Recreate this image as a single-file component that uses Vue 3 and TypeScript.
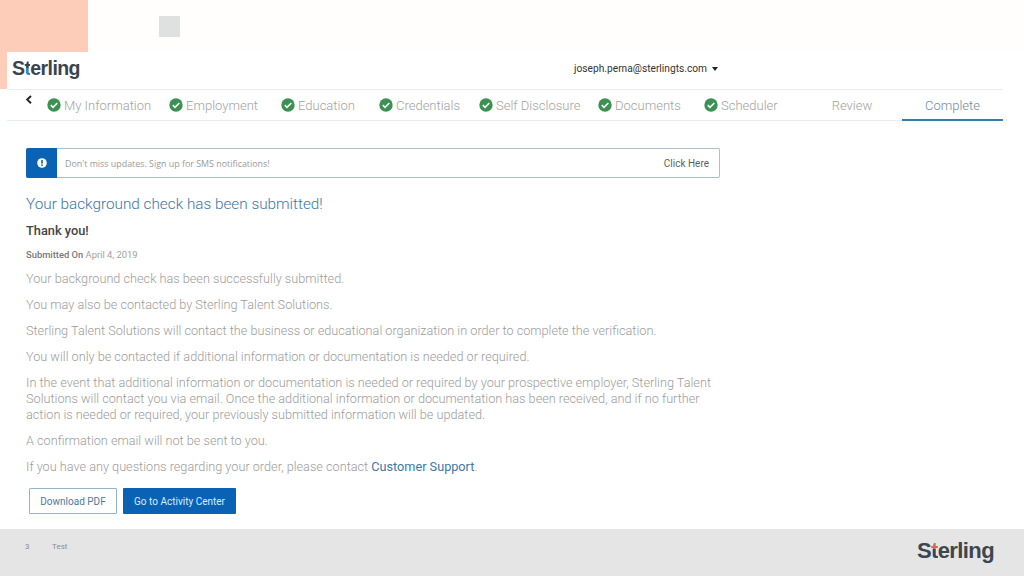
<script setup lang="ts">
interface Step { label: string; done: boolean; width: number; active?: boolean }
const steps: Step[] = [
  { label: 'My Information', done: true, width: 122 },
  { label: 'Employment', done: true, width: 112 },
  { label: 'Education', done: true, width: 98 },
  { label: 'Credentials', done: true, width: 100 },
  { label: 'Self Disclosure', done: true, width: 119 },
  { label: 'Documents', done: true, width: 106 },
  { label: 'Scheduler', done: true, width: 98 },
  { label: 'Review', done: false, width: 100 },
  { label: 'Complete', done: false, width: 101, active: true },
]
const paragraphs: string[] = [
  'Your background check has been successfully submitted.',
  'You may also be contacted by Sterling Talent Solutions.',
  'Sterling Talent Solutions will contact the business or educational organization in order to complete the verification.',
  'You will only be contacted if additional information or documentation is needed or required.',
  'In the event that additional information or documentation is needed or required by your prospective employer, Sterling Talent Solutions will contact you via email. Once the additional information or documentation has been received, and if no further action is needed or required, your previously submitted information will be updated.',
  'A confirmation email will not be sent to you.',
]
</script>

<template>
  <div class="slide">
    <div class="peach" />
    <div class="topband"><div class="square" /></div>
    <main class="screen">
      <header class="head">
        <div class="logo">S<span class="logo-t">t</span>erling</div>
        <div class="user">joseph.perna@sterlingts.com<span class="caret" /></div>
      </header>
      <nav class="steps">
        <svg class="back" width="8" height="10" viewBox="0 0 8 10"><path d="M6 1 2.2 4.6 6 8.2" fill="none" stroke="#222" stroke-width="1.9" /></svg>
        <div
          v-for="s in steps"
          :key="s.label"
          class="step"
          :class="{ active: s.active, plain: !s.done }"
          :style="{ width: s.width + 'px' }"
        >
          <svg v-if="s.done" class="check" width="14" height="14" viewBox="0 0 14 14">
            <circle cx="7" cy="7" r="6.7" fill="#3b9250" />
            <path d="M3.8 7.2 6 9.3 10.3 5" fill="none" stroke="#fff" stroke-width="1.7" />
          </svg>
          <span>{{ s.label }}</span>
        </div>
      </nav>
      <section class="content">
        <div class="banner">
          <div class="banner-icon">
            <svg width="10" height="10" viewBox="0 0 10 10">
              <circle cx="5" cy="5" r="4.8" fill="#fff" />
              <rect x="4.2" y="2" width="1.6" height="3.6" fill="#0a62b4" />
              <rect x="4.2" y="6.4" width="1.6" height="1.5" fill="#0a62b4" />
            </svg>
          </div>
          <span class="banner-text">Don't miss updates. Sign up for SMS notifications!</span>
          <span class="banner-link">Click Here</span>
        </div>
        <h1>Your background check has been submitted!</h1>
        <h2>Thank you!</h2>
        <div class="submitted"><b>Submitted On</b> April 4, 2019</div>
        <p v-for="p in paragraphs" :key="p">{{ p }}</p>
        <p>If you have any questions regarding your order, please contact <span class="link">Customer Support</span>.</p>
        <div class="actions">
          <button class="btn outline">Download PDF</button>
          <button class="btn solid">Go to Activity Center</button>
        </div>
      </section>
    </main>
    <footer class="foot">
      <span class="num">3</span>
      <span class="foot-label">Test</span>
      <div class="logo foot-logo">S<span class="logo-t red">t</span>erling</div>
    </footer>
  </div>
</template>

<style>
html, body { margin: 0; background: #fff; }
</style>

<style scoped>
.slide {
  position: relative;
  width: 1024px;
  height: 576px;
  overflow: hidden;
  display: flex;
  flex-direction: column;
  background: #fff;
  font-family: Roboto, "Liberation Sans", sans-serif;
}
.peach {
  position: absolute;
  left: 0;
  top: 0;
  z-index: 1;
  width: 88px;
  height: 89px;
  background: #fecdb9;
}
.topband {
  height: 52px;
  flex: none;
  background: #fffefd;
  padding: 16px 0 0 159px;
  box-sizing: border-box;
}
.square { width: 21px; height: 21px; background: #dfe1e0; }
.screen {
  position: relative;
  z-index: 2;
  flex: 1;
  margin-left: 7px;
  background: #fff;
  display: flex;
  flex-direction: column;
}
.head {
  height: 38px;
  flex: none;
  display: flex;
  align-items: center;
  justify-content: space-between;
  box-sizing: border-box;
  border-bottom: 1px solid #ebeef0;
  margin-right: 21px;
  padding-left: 5px;
}
.logo {
  font-family: "Liberation Sans", Arial, sans-serif;
  font-size: 19.5px;
  font-weight: 700;
  letter-spacing: -0.6px;
  color: #3a444c;
  line-height: 1;
  margin-top: -3px;
}
.logo-t {
  background: linear-gradient(#3a444c 50%, #2d86c0 50%);
  -webkit-background-clip: text;
  background-clip: text;
  color: transparent;
}
.logo-t.red { background-image: linear-gradient(#d9694f 45%, #3d464d 45%); }
.user {
  display: flex;
  align-items: center;
  font-size: 10.2px;
  color: #333;
  margin-right: 285px;
  margin-top: -4px;
}
.caret {
  width: 0;
  height: 0;
  margin-left: 5px;
  border-left: 3.5px solid transparent;
  border-right: 3.5px solid transparent;
  border-top: 4px solid #222;
}
.steps {
  height: 31px;
  flex: none;
  display: flex;
  align-items: center;
  margin-right: 21px;
  border-bottom: 1px solid #e6ecef;
  box-sizing: border-box;
  position: relative;
  padding-left: 40px;
}
.back { position: absolute; left: 18px; top: 5px; }
.step {
  flex: none;
  height: 30px;
  display: flex;
  align-items: center;
  gap: 3px;
  font-size: 13px;
  font-weight: 300;
  color: #a2a2a2;
  box-sizing: border-box;
  white-space: nowrap;
  position: relative;
}
.step.plain { justify-content: center; }
.step.active { color: #6d8ba6; }
.step.active::after {
  content: "";
  position: absolute;
  left: 0;
  right: 0;
  bottom: -1px;
  height: 2px;
  background: #2f7fae;
}
.check { flex: none; }
.content {
  padding: 27px 0 0 19px;
  width: 694px;
}
.banner {
  width: 694px;
  height: 30px;
  box-sizing: border-box;
  display: flex;
  align-items: center;
  border: 1px solid #a9c0cf;
  border-left: none;
  border-radius: 2px;
}
.banner-icon {
  width: 31px;
  height: 30px;
  margin: -1px 0;
  flex: none;
  display: flex;
  align-items: center;
  justify-content: center;
  background: #0a62b4;
  border-radius: 2px 0 0 2px;
}
.banner-text {
  margin-left: 8px;
  font-size: 8.9px;
  color: #9a9a9a;
  font-family: "Open Sans", Roboto, sans-serif;
  flex: 1;
}
.banner-link { font-size: 10px; color: #5f5f5f; margin-right: 10px; }
h1 {
  margin: 16px 0 0;
  font-size: 15.3px;
  line-height: 20px;
  font-weight: 300;
  color: #3c77a5;
}
h2 {
  margin: 9px 0 0;
  font-size: 12.8px;
  line-height: 16px;
  font-weight: 500;
  color: #444;
}
.submitted {
  margin-top: 10px;
  font-size: 9.4px;
  line-height: 12px;
  color: #a0a0a0;
  margin-bottom: 10px;
}
.submitted b { font-weight: 500; color: #777; }
p {
  margin: 0 0 10px;
  font-size: 12.7px;
  line-height: 16px;
  font-weight: 300;
  color: #9c9c9c;
}
.link { color: #3c78a8; font-weight: 400; }
.actions { display: flex; gap: 6px; margin: 13px 0 0 3px; }
.btn {
  height: 26px;
  border-radius: 1px;
  font-family: Roboto, sans-serif;
  font-size: 10px;
  padding: 0;
  box-sizing: border-box;
}
.outline {
  width: 88px;
  background: #fff;
  border: 1px solid #8fb4cc;
  color: #4d7a9e;
}
.solid {
  width: 113px;
  background: #0a62b4;
  border: none;
  color: #d8ecfb;
}
.foot {
  position: relative;
  height: 47px;
  flex: none;
  background: #e5e5e6;
  display: flex;
  align-items: center;
  padding: 0 30px 0 25px;
  box-sizing: border-box;
  font-size: 8px;
  color: #8c8c8c;
}
.num { width: 27px; margin-top: -12px; }
.foot-label { margin-top: -12px; }
.foot-logo { margin-left: auto; margin-top: -4px; color: #3d464d; font-size: 22px; }
</style>
